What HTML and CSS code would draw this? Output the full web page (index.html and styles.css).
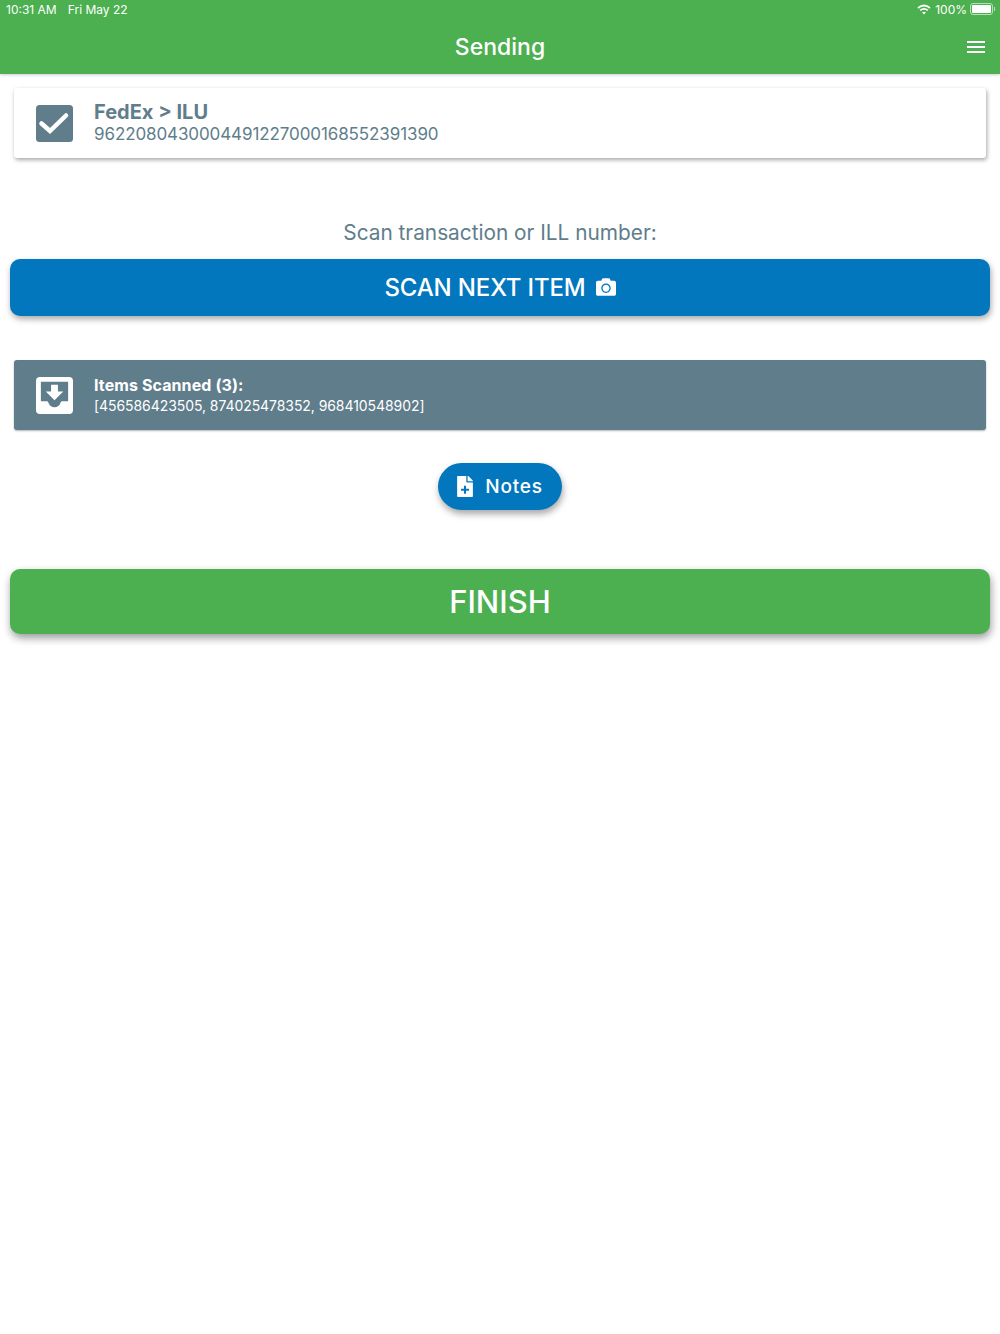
FILE: index.html
```html
<!DOCTYPE html>
<html lang="en">
<head>
    <meta charset="UTF-8">
    <meta name="viewport" content="width=device-width, initial-scale=1.0">
    <title>Sending</title>
    <link rel="stylesheet" href="styles.css">
</head>
<body>
    <header class="header">
        <div class="status-bar">
            <div class="status-left"><span>10:31 AM</span><span>Fri May 22</span></div>
            <div class="status-right">
                <svg class="wifi" viewBox="0 0 14 11" width="14" height="11">
                    <path class="wifi-arc" d="M1 4Q7-1 13 4"/>
                    <path class="wifi-arc" d="M3.200 6.400Q7 3.200 10.800 6.400"/>
                    <path d="M5 8.300Q7 7 9 8.300L7 10.500z"/>
                </svg>
                <span>100%</span>
                <div class="battery"><div class="battery-fill"></div></div>
                <div class="battery-tip"></div>
            </div>
        </div>
        <div class="title-bar">
            <h1 class="title">Sending</h1>
            <div class="menu-icon"><span></span><span></span><span></span></div>
        </div>
    </header>

    <main class="content">
        <div class="card card-light">
            <svg class="card-icon" viewBox="0 0 37 37" width="37" height="37">
                <rect width="37" height="37" rx="3.500" fill="#607d8b"/>
                <polyline points="5.500,18.500 14,26 30,10.500" fill="none" stroke="#fff" stroke-width="4.500" stroke-linecap="round" stroke-linejoin="miter"/>
            </svg>
            <div class="card-text">
                <div class="card-title">FedEx &gt; ILU</div>
                <div class="card-number">9622080430004491227000168552391390</div>
            </div>
        </div>

        <p class="scan-label">Scan transaction or ILL number:</p>

        <button class="button button-blue">
            SCAN NEXT ITEM
            <svg class="camera" viewBox="0 0 512 512" width="20" height="20">
                <path fill="#fff" d="M512 144v288c0 26.500-21.500 48-48 48H48c-26.500 0-48-21.500-48-48V144c0-26.500 21.500-48 48-48h88l12.300-32.900c7-18.700 24.900-31.100 44.900-31.100h125.500c20 0 37.900 12.400 44.900 31.100L376 96h88c26.500 0 48 21.500 48 48zM376 288c0-66.200-53.800-120-120-120s-120 53.800-120 120 53.800 120 120 120 120-53.800 120-120zm-32 0c0 48.500-39.500 88-88 88s-88-39.500-88-88 39.500-88 88-88 88 39.500 88 88z"/>
            </svg>
        </button>

        <div class="card card-dark">
            <svg class="card-icon" viewBox="0 0 38 38" width="37" height="37">
                <rect width="38" height="38" rx="4" fill="#fff"/>
                <path fill="#607d8b" d="M5 5h28v20h-6c-1 0-1.500.6-1.900 1.700-.8 2.500-3.100 4.300-6.100 4.300s-5.300-1.800-6.100-4.300c-.4-1.100-.9-1.700-1.900-1.700H5z"/>
                <path fill="#fff" d="M15.500 8h7v7h5.500L19 24l-9-9h5.500z"/>
            </svg>
            <div class="card-text">
                <div class="items-title">Items Scanned (3):</div>
                <div class="items-list">[456586423505, 874025478352, 968410548902]</div>
            </div>
        </div>

        <button class="notes">
            <svg viewBox="0 0 384 512" width="16" height="21">
                <path fill="#fff" d="M224 136V0H24C10.700 0 0 10.700 0 24v464c0 13.300 10.700 24 24 24h336c13.300 0 24-10.700 24-24V160H248c-13.200 0-24-10.800-24-24zm160-14.100v6.100H256V0h6.100c6.400 0 12.500 2.500 17 7l97.900 98c4.500 4.500 7 10.600 7 16.900z"/>
                <path fill="#0277bd" d="M168 240h48v72h72v48h-72v72h-48v-72H96v-48h72z"/>
            </svg>
            Notes
        </button>

        <button class="button button-green">FINISH</button>
    </main>
</body>
</html>
```

FILE: styles.css
```css
body {
    margin: 0;
    min-height: 100vh;
    background-color: #fff;
    font-family: Inter, "Liberation Sans", sans-serif;
}
.header {
    height: 74px;
    background-color: #4caf50;
    color: #fff;
    box-shadow: 0 1px 3px rgba(0,0,0,0.2);
}
.status-bar {
    height: 18px;
    padding: 0 5px 0 6px;
    display: flex;
    justify-content: space-between;
    align-items: center;
    font-size: 12px;
}
.status-left {
    display: flex;
    gap: 11px;
}
.status-right {
    display: flex;
    align-items: center;
    gap: 3px;
}
.wifi {
    fill: #fff;
    margin-right: 1px;
}
.wifi-arc {
    fill: none;
    stroke: #fff;
    stroke-width: 1.7;
}
.battery {
    width: 23px;
    height: 12px;
    box-sizing: border-box;
    border: 1px solid rgba(255,255,255,0.6);
    border-radius: 3px;
    padding: 1px;
}
.battery-fill {
    height: 100%;
    background: #fff;
    border-radius: 1px;
}
.battery-tip {
    width: 1px;
    height: 4px;
    margin-left: -2px;
    background: rgba(255,255,255,0.6);
}
.title-bar {
    height: 56px;
    display: flex;
    justify-content: center;
    align-items: center;
    position: relative;
}
.title {
    margin: 1px 0 0;
    font-size: 23px;
    font-weight: 500;
}
.menu-icon {
    position: absolute;
    right: 15px;
    top: 23px;
    width: 18px;
    display: flex;
    flex-direction: column;
    gap: 3px;
}
.menu-icon span {
    height: 2px;
    background: #fff;
}
.content {
    padding: 14px 10px 40px;
    display: flex;
    flex-direction: column;
    align-items: center;
}
.card {
    box-sizing: border-box;
    width: 972px;
    height: 70px;
    padding: 0 22px;
    display: flex;
    align-items: center;
    gap: 21px;
    border-radius: 3px;
}
.card-icon {
    flex-shrink: 0;
}
.card-light {
    background: #fff;
    box-shadow: 1px 2px 4px rgba(0,0,0,0.35);
}
.card-light .card-text {
    padding-bottom: 2px;
}
.card-dark {
    margin-top: 44px;
    background: #607d8b;
    color: #fff;
    box-shadow: 0 1px 2px rgba(0,0,0,0.3);
}
.card-title {
    font-size: 20px;
    font-weight: 700;
    line-height: 24px;
    color: #607d8b;
}
.card-number {
    font-size: 17px;
    letter-spacing: -0.1px;
    line-height: 20px;
    color: #607d8b;
}
.items-title {
    font-size: 16px;
    font-weight: 700;
    letter-spacing: 0.1px;
    line-height: 21px;
}
.items-list {
    font-size: 14px;
    letter-spacing: -0.07px;
    line-height: 19px;
}
.scan-label {
    margin: 63px 0 14px;
    font-size: 20.8px;
    line-height: 24px;
    color: #607d8b;
}
.button {
    width: 980px;
    border: none;
    border-radius: 10px;
    color: #fff;
    font-family: inherit;
    display: flex;
    justify-content: center;
    align-items: center;
    box-shadow: 1px 3px 6px rgba(0,0,0,0.35);
}
.button-blue {
    height: 57px;
    gap: 10px;
    background: #0277bd;
    font-size: 24px;
    font-weight: 500;
    letter-spacing: -0.15px;
}
.camera {
    margin-bottom: 2px;
}
.button-green {
    height: 65px;
    margin-top: 59px;
    background: #4caf50;
    font-size: 31px;
    font-weight: 500;
    box-shadow: 1px 4px 8px rgba(0,0,0,0.4);
}
.notes {
    width: 124px;
    height: 47px;
    margin-top: 33px;
    border: none;
    border-radius: 24px;
    background: #0277bd;
    color: #fff;
    font-family: inherit;
    font-size: 19px;
    font-weight: 500;
    letter-spacing: 0.8px;
    display: flex;
    justify-content: center;
    align-items: center;
    gap: 12px;
    box-shadow: 1px 4px 7px rgba(0,0,0,0.35);
}
```
